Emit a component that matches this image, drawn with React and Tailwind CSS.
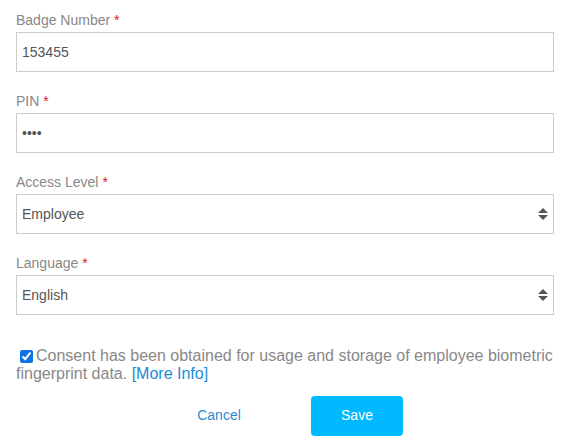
import React, { useState } from 'react';

const Label = ({ children }) => (
  <label className="block h-5 text-[14px] leading-5 text-[#888888]">
    {children} <span className="text-[#e4131f]">*</span>
  </label>
);

const Arrows = () => (
  <svg
    className="pointer-events-none absolute right-[6px] top-[14px]"
    width="10"
    height="12"
    viewBox="0 0 10 12"
  >
    <polygon points="0,5 5,0 10,5" fill="#555555" />
    <polygon points="0,7 10,7 5,12" fill="#555555" />
  </svg>
);

const SelectField = ({ label, value, options }) => (
  <div className="mb-[19px]">
    <Label>{label}</Label>
    <div className="relative mt-[2px]">
      <select
        defaultValue={value}
        className="block h-10 w-full appearance-none rounded-none border border-[#cccccc] bg-white pl-[5px] pr-6 text-[14px] text-[#555555] outline-none"
      >
        {options.map((o) => (
          <option key={o}>{o}</option>
        ))}
      </select>
      <Arrows />
    </div>
  </div>
);

const App = () => {
  const [agree, setAgree] = useState(true);

  return (
    <div
      className="min-h-[440px] bg-white pl-4 pr-[19px] pt-[10px]"
      style={{ fontFamily: '"Liberation Sans", Arial, sans-serif' }}
    >
      <div className="mb-[19px]">
        <Label>Badge Number</Label>
        <input
          defaultValue="153455"
          className="mt-[2px] block h-10 w-full border border-[#cccccc] px-[5px] text-[14px] text-[#555555] outline-none"
        />
      </div>

      <div className="mb-[19px]">
        <Label>PIN</Label>
        <input
          type="password"
          defaultValue="1234"
          className="mt-[2px] block h-10 w-full border border-[#cccccc] px-[5px] text-[14px] text-[#555555] outline-none"
        />
      </div>

      <SelectField label="Access Level" value="Employee" options={['Employee', 'Manager', 'Administrator']} />
      <SelectField label="Language" value="English" options={['English', 'Français', 'Español']} />

      <p className="mt-[32px] text-[16px] leading-[1.15] text-[#888888]">
        <input
          type="checkbox"
          checked={agree}
          onChange={(e) => setAgree(e.target.checked)}
          className="my-0 ml-1 mr-[3px] h-[13px] w-[13px] align-middle accent-[#0f74e3]"
        />Consent has been obtained for usage and storage of employee biometric fingerprint data.{' '}
        <a href="#" className="text-[#1a8bd5]">[More Info]</a>
      </p>

      <div className="mt-3 flex gap-[46px] pl-[157px]">
        <button className="h-10 w-[92px] text-[14px] text-[#2a8bd0]">Cancel</button>
        <button className="h-10 w-[92px] rounded bg-[#00b9ff] text-[14px] text-white">Save</button>
      </div>
    </div>
  );
};

export default App;
